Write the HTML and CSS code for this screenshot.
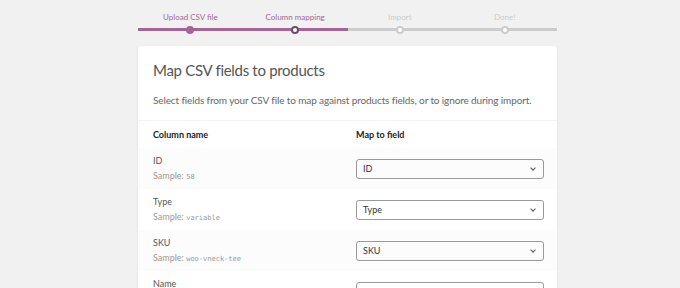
FILE: index.html
```html
<!DOCTYPE html>
<html lang="en">
<head>
    <meta charset="UTF-8">
    <title>Product import</title>
    <link rel="stylesheet" href="styles.css">
</head>
<body>
    <div class="wrap">
        <ol class="steps">
            <li class="step done"><span class="step-label">Upload CSV file</span><span class="track"><i class="dot"></i></span></li>
            <li class="step active"><span class="step-label">Column mapping</span><span class="track"><i class="dot"></i></span></li>
            <li class="step"><span class="step-label">Import</span><span class="track"><i class="dot"></i></span></li>
            <li class="step"><span class="step-label">Done!</span><span class="track"><i class="dot"></i></span></li>
        </ol>

        <div class="card">
            <div class="card-header">
                <h2>Map CSV fields to products</h2>
                <p>Select fields from your CSV file to map against products fields, or to ignore during import.</p>
            </div>

            <div class="mapping">
                <div class="row head">
                    <div class="col-name">Column name</div>
                    <div class="col-field">Map to field</div>
                </div>
                <div class="row alt">
                    <div class="col-name">ID<span class="sample">Sample: <code>58</code></span></div>
                    <div class="col-field"><div class="select">ID</div></div>
                </div>
                <div class="row">
                    <div class="col-name">Type<span class="sample">Sample: <code>variable</code></span></div>
                    <div class="col-field"><div class="select">Type</div></div>
                </div>
                <div class="row alt">
                    <div class="col-name">SKU<span class="sample">Sample: <code>woo-vneck-tee</code></span></div>
                    <div class="col-field"><div class="select">SKU</div></div>
                </div>
                <div class="row">
                    <div class="col-name">Name<span class="sample">Sample: <code>V-Neck T-Shirt</code></span></div>
                    <div class="col-field"><div class="select">Name</div></div>
                </div>
            </div>
        </div>
    </div>
</body>
</html>
```

FILE: styles.css
```css
* {
    margin: 0;
    padding: 0;
    box-sizing: border-box;
}

body {
    font-family: Lato, 'Noto Sans', sans-serif;
    background: #f1f1f1;
    color: #444;
    height: 288px;
    overflow: hidden;
}

.wrap {
    width: 419px;
    margin-left: 138px;
}

/* progress steps */
.steps {
    list-style: none;
    display: flex;
    padding-top: 11px;
}

.step {
    flex: 1;
    display: flex;
    flex-direction: column;
    align-items: center;
}

.step-label {
    font-size: 8px;
    line-height: 12px;
    color: #ccc;
    margin-bottom: 5px;
}

.track {
    position: relative;
    width: 100%;
    height: 3px;
    background: #ccc;
}

.dot {
    position: absolute;
    left: 50%;
    top: 50%;
    width: 8px;
    height: 8px;
    margin: -4px 0 0 -4px;
    border-radius: 50%;
    background: #fff;
    border: 2px solid #ccc;
}

.step.done .step-label,
.step.active .step-label {
    color: #a46497;
}

.step.done .track,
.step.active .track {
    background: #a46497;
}

.step.done .dot {
    background: #a46497;
    border-color: #a46497;
}

.step.active .dot {
    border-color: #6d4a66;
}

/* card */
.card {
    margin-top: 15px;
    background: #fff;
    border-radius: 3px;
    box-shadow: 0 1px 3px rgba(0, 0, 0, 0.06);
}

.card-header {
    height: 75px;
    padding: 14px 15px 0;
    border-bottom: 1px solid #f3f3f3;
}

.card-header h2 {
    font-size: 15px;
    font-weight: 400;
    letter-spacing: -0.3px;
    color: #555;
    line-height: 20px;
    margin-bottom: 13px;
}

.card-header p {
    font-size: 10px;
    letter-spacing: -0.12px;
    color: #666;
    line-height: 14px;
    white-space: nowrap;
}

.row {
    display: flex;
    align-items: center;
    height: 41px;
    padding: 0 13px 0 15px;
}

.row.head {
    height: 27px;
}

.row.alt {
    background: #fcfcfc;
}

.col-name {
    width: 203px;
    font-size: 9px;
    color: #555;
    line-height: 12px;
}

.head .col-name,
.head .col-field {
    font-weight: 700;
    color: #222;
}

.col-field {
    flex: 1;
    font-size: 9px;
}

.sample {
    display: block;
    margin-top: 3px;
    color: #999;
}

.sample code {
    font-family: 'DejaVu Sans Mono', monospace;
    font-size: 7px;
}

.select {
    position: relative;
    height: 20px;
    border: 1px solid #999;
    border-radius: 3px;
    padding: 0 6px;
    line-height: 18px;
    font-size: 9px;
    color: #333;
}

.select::after {
    content: '';
    position: absolute;
    right: 8px;
    top: 6px;
    width: 3px;
    height: 3px;
    border-right: 1px solid #555;
    border-bottom: 1px solid #555;
    transform: rotate(45deg);
}
```
